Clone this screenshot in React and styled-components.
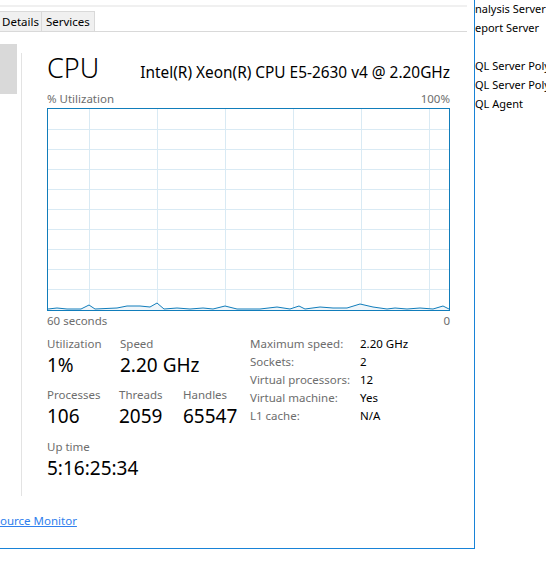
import React from 'react';
import styled, { createGlobalStyle } from 'styled-components';

const GlobalStyle = createGlobalStyle`
  html, body {
    margin: 0;
    padding: 0;
    background: #ffffff;
  }
  body {
    font-family: "Segoe UI", "Noto Sans", "Open Sans", sans-serif;
    color: #000000;
  }
`;

const Page = styled.div`
  display: flex;
  width: 546px;
  height: 568px;
  overflow: hidden;
  background: #ffffff;
`;

const Window = styled.div`
  flex: none;
  width: 474px;
  height: 548px;
  border-right: 1px solid #1883d7;
  border-bottom: 1px solid #1883d7;
  display: flex;
  flex-direction: column;
  overflow: hidden;
`;

const Stripe = styled.div`
  margin-top: 5px;
  width: 467px;
  height: 2px;
  background: #f0f0f0;
`;

const TabRow = styled.div`
  margin-top: 4px;
  width: 467px;
  height: 20px;
  display: flex;
  border-bottom: 1px solid #d9d9d9;
`;

const Tab = styled.div`
  height: 19px;
  padding: 0 ${p => p.$pad || 5}px;
  margin-left: ${p => p.$shift || 0}px;
  background: #f0f0f0;
  border: 1px solid #d9d9d9;
  border-bottom: none;
  margin-right: -1px;
  font-size: 11.5px;
  line-height: 19px;
  color: #000;
`;

const Body = styled.div`
  flex: 1;
  display: flex;
`;

const Sidebar = styled.div`
  flex: none;
  display: flex;
  gap: 4px;
`;

const SelectedItem = styled.div`
  width: 17px;
  height: 50px;
  margin-top: 12px;
  background: #d9d9d9;
`;

const Divider = styled.div`
  width: 1px;
  height: 443px;
  margin-top: 21px;
  background: #e3e3e3;
`;

const Panel = styled.div`
  margin-left: 25px;
  width: 403px;
  display: flex;
  flex-direction: column;
`;

const Heading = styled.div`
  display: flex;
  justify-content: space-between;
  align-items: baseline;
  margin-top: 16px;
  height: 44px;
`;

const Title = styled.div`
  font-size: 27px;
  font-weight: 300;
  line-height: 40px;
`;

const Model = styled.div`
  font-size: 15.4px;
  line-height: 20px;
`;

const AxisRow = styled.div`
  display: flex;
  justify-content: space-between;
  font-size: 11.5px;
  line-height: 14px;
  height: 14px;
  color: #6d6d6d;
  margin-top: ${p => p.$top || 0}px;
`;

const ChartBox = styled.div`
  margin-top: 2px;
  width: 401px;
  height: 201px;
  border: 1px solid #117dbb;
  svg {
    display: block;
  }
`;

const Stats = styled.div`
  display: flex;
  margin-top: 8px;
`;

const StatColumn = styled.div`
  width: 203px;
  display: flex;
  flex-direction: column;
`;

const StatRow = styled.div`
  display: flex;
  height: 51.5px;
`;

const Stat = styled.div`
  width: ${p => p.$w || 73}px;
  display: flex;
  flex-direction: column;
`;

const StatLabel = styled.div`
  font-size: 11.5px;
  line-height: 16px;
  color: #6d6d6d;
`;

const StatValue = styled.div`
  font-size: 19px;
  line-height: 26px;
  color: #000;
`;

const InfoTable = styled.div`
  display: grid;
  grid-template-columns: 110px auto;
  grid-auto-rows: 18px;
  margin-top: -1px;
  font-size: 11.5px;
  line-height: 18px;
`;

const InfoLabel = styled.div`
  color: #6d6d6d;
`;

const InfoValue = styled.div`
  color: #000;
`;

const Footer = styled.div`
  height: 54px;
`;

const MonitorLink = styled.a`
  display: block;
  margin-top: 17px;
  font-size: 11.5px;
  line-height: 16px;
  color: #2f80ed;
  text-decoration: underline;
  cursor: pointer;
`;

const Behind = styled.div`
  flex: 1;
  display: flex;
  flex-direction: column;
  margin-top: -1px;
  font-size: 11px;
  line-height: 19px;
  white-space: nowrap;
  overflow: hidden;
`;

const BehindItem = styled.div`
  height: 19px;
`;

const data = [
  [0, 0], [9, 1], [19, 0], [33, 0], [41, 4], [47, 0], [69, 1], [79, 3], [92, 3],
  [102, 2], [109, 6], [116, 0], [129, 1], [142, 0], [155, 1], [165, 0], [177, 3],
  [189, 0], [212, 0], [229, 2], [242, 0], [251, 3], [257, 0], [272, 2], [285, 1],
  [299, 1], [312, 5], [325, 2], [339, 0], [347, 1], [359, 0], [372, 1], [385, 0],
  [395, 3], [401, 0]
];

function UsageChart() {
  const w = 401;
  const h = 201;
  const verticals = [41, 109, 177, 245, 313, 381];
  const horizontals = [20, 40, 60, 80, 100, 120, 140, 160, 180];
  const line = data.map(([x, v]) => `${x},${h - 1 - v}`).join(' ');
  const area = `0,${h} ${line} ${w},${h}`;

  return (
    <svg width={w} height={h} viewBox={`0 0 ${w} ${h}`}>
      {verticals.map(x => (
        <line key={'v' + x} x1={x + 0.5} y1={0} x2={x + 0.5} y2={h} stroke="#d9eaf4" />
      ))}
      {horizontals.map(y => (
        <line key={'h' + y} x1={0} y1={y + 0.5} x2={w} y2={y + 0.5} stroke="#d9eaf4" />
      ))}
      <polygon points={area} fill="#f1f6fa" />
      <polyline points={line} fill="none" stroke="#117dbb" strokeWidth="1" />
    </svg>
  );
}

const info = [
  ['Maximum speed:', '2.20 GHz'],
  ['Sockets:', '2'],
  ['Virtual processors:', '12'],
  ['Virtual machine:', 'Yes'],
  ['L1 cache:', 'N/A']
];

export default function App() {
  return (
    <Page>
      <GlobalStyle />
      <Window>
        <Stripe />
        <TabRow>
          <Tab $pad={2} $shift={-1}>Details</Tab>
          <Tab $pad={4}>Services</Tab>
        </TabRow>
        <Body>
          <Sidebar>
            <SelectedItem />
            <Divider />
          </Sidebar>
          <Panel>
            <Heading>
              <Title>CPU</Title>
              <Model>Intel(R) Xeon(R) CPU E5-2630 v4 @ 2.20GHz</Model>
            </Heading>
            <AxisRow>
              <span>% Utilization</span>
              <span>100%</span>
            </AxisRow>
            <ChartBox>
              <UsageChart />
            </ChartBox>
            <AxisRow $top={3}>
              <span>60 seconds</span>
              <span>0</span>
            </AxisRow>
            <Stats>
              <StatColumn>
                <StatRow>
                  <Stat $w={73}>
                    <StatLabel>Utilization</StatLabel>
                    <StatValue>1%</StatValue>
                  </Stat>
                  <Stat $w={100}>
                    <StatLabel>Speed</StatLabel>
                    <StatValue>2.20 GHz</StatValue>
                  </Stat>
                </StatRow>
                <StatRow>
                  <Stat $w={72}>
                    <StatLabel>Processes</StatLabel>
                    <StatValue>106</StatValue>
                  </Stat>
                  <Stat $w={64}>
                    <StatLabel>Threads</StatLabel>
                    <StatValue>2059</StatValue>
                  </Stat>
                  <Stat $w={66}>
                    <StatLabel>Handles</StatLabel>
                    <StatValue>65547</StatValue>
                  </Stat>
                </StatRow>
                <StatRow>
                  <Stat $w={120}>
                    <StatLabel>Up time</StatLabel>
                    <StatValue>5:16:25:34</StatValue>
                  </Stat>
                </StatRow>
              </StatColumn>
              <InfoTable>
                {info.map(([k, v]) => (
                  <React.Fragment key={k}>
                    <InfoLabel>{k}</InfoLabel>
                    <InfoValue>{v}</InfoValue>
                  </React.Fragment>
                ))}
              </InfoTable>
            </Stats>
          </Panel>
        </Body>
        <Footer>
          <MonitorLink>ource Monitor</MonitorLink>
        </Footer>
      </Window>
      <Behind>
        <BehindItem>nalysis Server</BehindItem>
        <BehindItem>eport Server</BehindItem>
        <BehindItem />
        <BehindItem>QL Server Poly</BehindItem>
        <BehindItem>QL Server Poly</BehindItem>
        <BehindItem>QL Agent</BehindItem>
      </Behind>
    </Page>
  );
}
